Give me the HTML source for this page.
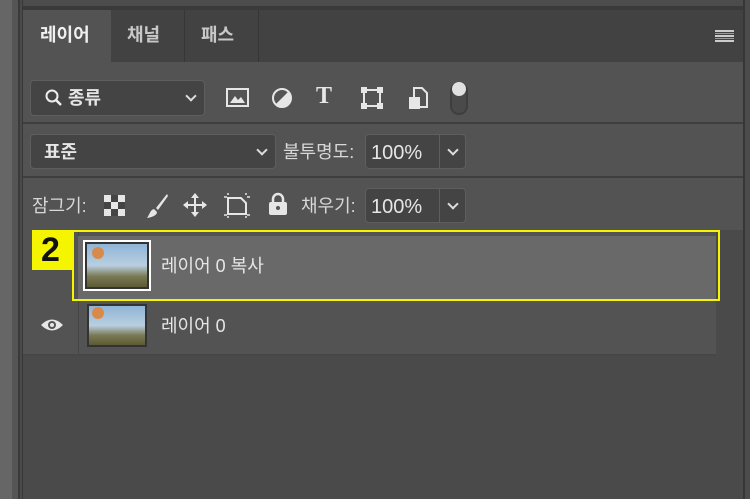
<!DOCTYPE html>
<html><head><meta charset="utf-8"><style>
*{margin:0;padding:0;box-sizing:border-box}
body{width:750px;height:499px;overflow:hidden;background:#4a4a4a;position:relative;font-family:"Liberation Sans","Noto Sans CJK KR",sans-serif;color:#e6e6e6}
.a{position:absolute}
.box{position:absolute;background:#444;border:1px solid #5e5e5e;border-radius:4px}
.t{position:absolute;font-size:18px;white-space:nowrap;line-height:22px}
.chev{position:absolute;width:8px;height:8px;border-right:2px solid #ddd;border-bottom:2px solid #ddd;transform:rotate(45deg)}
</style></head><body>
<div class="a" style="left:0;top:0;width:12px;height:499px;background:#666"></div>
<div class="a" style="left:12px;top:0;width:6px;height:499px;background:#555"></div>
<div class="a" style="left:18px;top:0;width:2px;height:499px;background:#3a3a3a"></div>
<div class="a" style="left:20px;top:0;width:3px;height:499px;background:#4a4a4a"></div>
<div class="a" style="left:22px;top:0;width:1px;height:499px;background:#383838"></div>
<div class="a" style="left:23px;top:0;width:720px;height:6px;background:#4c4c4c"></div>
<div class="a" style="left:23px;top:6px;width:720px;height:4px;background:#3a3a3a"></div>
<div class="a" style="left:743px;top:0;width:2px;height:499px;background:#363636"></div>
<div class="a" style="left:745px;top:0;width:5px;height:499px;background:#4c4c4c"></div>
<!-- tab bar -->
<div class="a" style="left:23px;top:10px;width:720px;height:52px;background:#424242"></div>
<div class="a" style="left:23px;top:10px;width:88px;height:53px;background:#535353"></div>
<div class="a" style="left:184px;top:10px;width:1px;height:52px;background:#363636"></div>
<div class="a" style="left:258px;top:10px;width:1px;height:52px;background:#363636"></div>
<div class="t" style="left:40px;top:24px;font-weight:bold;color:#f0f0f0">레이어</div>
<div class="t" style="left:127px;top:24px;color:#c8c8c8;font-weight:bold">채널</div>
<div class="t" style="left:201px;top:24px;color:#c8c8c8;font-weight:bold">패스</div>
<div class="a" style="left:715px;top:30px;width:19px;height:12px;border-top:2px solid #ccc;border-bottom:2px solid #ccc"></div>
<div class="a" style="left:715px;top:35px;width:19px;height:2px;background:#ccc"></div>
<div class="a" style="left:715px;top:33px;width:19px;height:1px;background:#999"></div>
<div class="a" style="left:715px;top:38px;width:19px;height:1px;background:#999"></div>
<!-- panel body -->
<div class="a" style="left:23px;top:62px;width:720px;height:168px;background:#535353"></div>
<div class="a" style="left:23px;top:122px;width:720px;height:2px;background:#3e3e3e"></div>
<div class="a" style="left:23px;top:176px;width:720px;height:2px;background:#3e3e3e"></div>
<!-- row1 -->
<div class="box" style="left:30px;top:80px;width:175px;height:36px"></div>
<svg class="a" style="left:44px;top:88px" width="20" height="20"><circle cx="8" cy="8" r="5.5" fill="none" stroke="#eee" stroke-width="2"/><line x1="12" y1="12" x2="17" y2="17" stroke="#eee" stroke-width="2.5"/></svg>
<div class="t" style="left:68px;top:87px;font-weight:bold">종류</div>
<div class="chev" style="left:187px;top:92px"></div>
<svg class="a" style="left:226px;top:88px" width="24" height="20"><rect x="1" y="1" width="21" height="17" fill="none" stroke="#e6e6e6" stroke-width="2"/><path d="M4 15 L9 8 L12 12 L15 9 L19 15Z" fill="#e6e6e6"/></svg>
<svg class="a" style="left:271px;top:87px" width="22" height="22"><circle cx="11" cy="11" r="9" fill="none" stroke="#e6e6e6" stroke-width="2"/><path d="M17.4 4.6 A9 9 0 0 1 4.6 17.4Z" fill="#e6e6e6"/></svg>
<div class="t" style="left:316px;top:85px;font-family:'Liberation Serif',serif;font-size:24px;font-weight:bold">T</div>
<svg class="a" style="left:361px;top:87px" width="23" height="22"><rect x="3" y="3" width="16" height="16" fill="none" stroke="#e6e6e6" stroke-width="2"/><rect x="0" y="0" width="6" height="6" fill="#e6e6e6"/><rect x="16" y="0" width="6" height="6" fill="#e6e6e6"/><rect x="0" y="16" width="6" height="6" fill="#e6e6e6"/><rect x="16" y="16" width="6" height="6" fill="#e6e6e6"/></svg>
<svg class="a" style="left:407px;top:86px" width="22" height="24"><path d="M7 2 H15 L20 7 V21 H7Z" fill="none" stroke="#e6e6e6" stroke-width="2"/><rect x="2" y="11" width="11" height="12" fill="#e6e6e6"/></svg>
<div class="a" style="left:450px;top:82px;width:18px;height:33px;border:2px solid #3e3e3e;border-radius:9px;background:#4a4a4a"></div>
<div class="a" style="left:452px;top:82px;width:14px;height:14px;border-radius:7px;background:#e0e0e0"></div>
<!-- row2 -->
<div class="box" style="left:30px;top:134px;width:246px;height:35px"></div>
<div class="t" style="left:44px;top:141px;font-weight:bold">표준</div>
<div class="chev" style="left:258px;top:146px"></div>
<div class="t" style="left:283px;top:141px;color:#d8d8d8">불투명도:</div>
<div class="box" style="left:365px;top:134px;width:101px;height:35px"></div>
<div class="a" style="left:439px;top:135px;width:1px;height:33px;background:#5e5e5e"></div>
<div class="t" style="left:371px;top:142px;font-size:20px">100%</div>
<div class="chev" style="left:449px;top:146px"></div>
<!-- row3 -->
<div class="t" style="left:32px;top:195px;color:#d8d8d8">잠그기:</div>
<svg class="a" style="left:104px;top:195px" width="21" height="21"><rect x="0" y="0" width="21" height="21" fill="#e6e6e6"/><rect x="7" y="0" width="7" height="7" fill="#444"/><rect x="0" y="7" width="7" height="7" fill="#444"/><rect x="14" y="7" width="7" height="7" fill="#444"/><rect x="7" y="14" width="7" height="7" fill="#444"/></svg>
<svg class="a" style="left:145px;top:193px" width="24" height="26"><path d="M22 1 L11 15 L13 17 L23 3Z" fill="#e6e6e6"/><path d="M9 16 C5 17 5 21 2 25 C8 24 12 22 12 19Z" fill="#e6e6e6"/></svg>
<svg class="a" style="left:183px;top:193px" width="24" height="24"><path d="M12 1 V23 M1 12 H23" stroke="#e6e6e6" stroke-width="2"/><path d="M12 0 L8 5 H16Z M12 24 L8 19 H16Z M0 12 L5 8 V16Z M24 12 L19 8 V16Z" fill="#e6e6e6"/></svg>
<svg class="a" style="left:224px;top:193px" width="27" height="25"><path d="M4 5 H17 L22 10 V21 H4Z" fill="none" stroke="#e6e6e6" stroke-width="2"/><path d="M0 4 H3 M23 4 H26 M0 22 H3 M23 22 H26 M4 0 V2 M22 0 V2 M4 23 V25 M22 23 V25" stroke="#e6e6e6" stroke-width="1.5"/></svg>
<svg class="a" style="left:268px;top:192px" width="20" height="24"><path d="M5 11 V7 A5 5 0 0 1 15 7 V11" fill="none" stroke="#e6e6e6" stroke-width="2.5"/><rect x="1" y="10" width="18" height="13" rx="2" fill="#e6e6e6"/><circle cx="10" cy="16" r="2" fill="#555"/></svg>
<div class="t" style="left:301px;top:195px;color:#d8d8d8">채우기:</div>
<div class="box" style="left:365px;top:188px;width:101px;height:35px"></div>
<div class="a" style="left:439px;top:189px;width:1px;height:33px;background:#5e5e5e"></div>
<div class="t" style="left:371px;top:196px;font-size:20px">100%</div>
<div class="chev" style="left:449px;top:200px"></div>
<!-- layers -->
<div class="a" style="left:23px;top:230px;width:693px;height:126px;background:#535353"></div>
<div class="a" style="left:78px;top:230px;width:1px;height:125px;background:#464646"></div>
<div class="a" style="left:23px;top:354px;width:693px;height:2px;background:#474747"></div>
<div class="a" style="left:78px;top:236px;width:638px;height:64px;background:#696969"></div>
<div class="a" style="left:72px;top:230px;width:648px;height:71px;border:2px solid #f5f500"></div>
<div class="a" style="left:32px;top:230px;width:42px;height:40px;background:#f5f500"></div>
<div class="t" style="left:41px;top:233px;font-size:34px;line-height:34px;font-weight:bold;color:#111">2</div>
<div class="a" style="left:83px;top:240px;width:68px;height:51px;border:2px solid #fff;background:#333"></div>
<div class="a" style="left:87px;top:244px;width:60px;height:43px;background:linear-gradient(#8fb4d6 0%,#b9cfe0 50%,#7a7a55 75%,#5c5a34 100%)"></div>
<div class="a" style="left:92px;top:247px;width:12px;height:12px;border-radius:6px;background:#d98a4a"></div>
<div class="t" style="left:161px;top:255px">레이어 0 복사</div>
<svg class="a" style="left:40px;top:318px" width="24" height="14"><path d="M1 7 Q12 -4 23 7 Q12 18 1 7Z" fill="#e6e6e6"/><circle cx="12" cy="7" r="4" fill="#535353"/><circle cx="12" cy="7" r="2" fill="#e6e6e6"/></svg>
<div class="a" style="left:87px;top:304px;width:60px;height:43px;border:2px solid #333;background:linear-gradient(#8fb4d6 0%,#b9cfe0 50%,#7a7a55 75%,#5c5a34 100%)"></div>
<div class="a" style="left:92px;top:307px;width:12px;height:12px;border-radius:6px;background:#d98a4a"></div>
<div class="t" style="left:161px;top:315px">레이어 0</div>
</body></html>
